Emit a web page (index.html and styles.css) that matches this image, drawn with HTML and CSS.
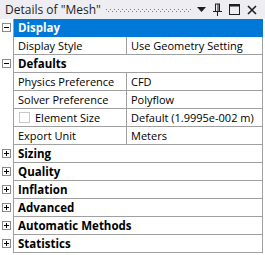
FILE: index.html
```html
<!DOCTYPE html>
<html lang="en">

<head>
    <meta charset="UTF-8">
    <title>Details of "Mesh"</title>
    <link rel="stylesheet" href="styles.css">
</head>

<body>
    <div class="panel">
        <div class="titlebar">
            <span class="title">Details of "Mesh"</span>
            <span class="grip"></span>
            <span class="tools">
                <svg width="9" height="6" viewBox="0 0 9 6"><path d="M0 0h9L4.5 5z" fill="#1e1e1e"/></svg>
                <svg width="9" height="13" viewBox="0 0 9 13"><path d="M2 1h5M2.5 1v7M6.5 1v7M5 1v7M0 8.5h9M4.5 9v4" stroke="#1e1e1e" stroke-width="1" fill="none"/></svg>
                <svg width="11" height="11" viewBox="0 0 11 11"><rect x="0.5" y="0.5" width="10" height="10" fill="none" stroke="#1e1e1e" stroke-width="1"/><path d="M0 1.5h11" stroke="#1e1e1e" stroke-width="2"/></svg>
                <svg width="10" height="10" viewBox="0 0 10 10"><path d="M1 1l8 8M9 1l-8 8" stroke="#1e1e1e" stroke-width="1.6"/></svg>
            </span>
        </div>
        <div class="grid">
            <div class="row group selected">
                <span class="toggle open"></span>
                <div class="cell full">Display</div>
            </div>
            <div class="row">
                <span class="gutter"></span>
                <div class="cell name">Display Style</div>
                <div class="cell value">Use Geometry Setting</div>
            </div>
            <div class="row group">
                <span class="toggle open"></span>
                <div class="cell full">Defaults</div>
            </div>
            <div class="row">
                <span class="gutter"></span>
                <div class="cell name">Physics Preference</div>
                <div class="cell value">CFD</div>
            </div>
            <div class="row">
                <span class="gutter"></span>
                <div class="cell name">Solver Preference</div>
                <div class="cell value">Polyflow</div>
            </div>
            <div class="row">
                <span class="gutter"></span>
                <div class="cell name"><span class="check"></span>Element Size</div>
                <div class="cell value">Default (1.9995e-002 m)</div>
            </div>
            <div class="row">
                <span class="gutter"></span>
                <div class="cell name">Export Unit</div>
                <div class="cell value">Meters</div>
            </div>
            <div class="row group">
                <span class="toggle"></span>
                <div class="cell full">Sizing</div>
            </div>
            <div class="row group">
                <span class="toggle"></span>
                <div class="cell full">Quality</div>
            </div>
            <div class="row group">
                <span class="toggle"></span>
                <div class="cell full">Inflation</div>
            </div>
            <div class="row group">
                <span class="toggle"></span>
                <div class="cell full">Advanced</div>
            </div>
            <div class="row group">
                <span class="toggle"></span>
                <div class="cell full">Automatic Methods</div>
            </div>
            <div class="row group">
                <span class="toggle"></span>
                <div class="cell full">Statistics</div>
            </div>
        </div>
    </div>
</body>

</html>
```

FILE: styles.css
```css
body {
    margin: 0;
    padding: 0;
    background-color: #ffffff;
    font-family: 'Open Sans', 'Noto Sans', sans-serif;
    font-size: 11px;
    color: #000000;
}

.panel {
    width: 265px;
    height: 255px;
    background-color: #ffffff;
    overflow: hidden;
}

.titlebar {
    height: 19px;
    display: flex;
    align-items: center;
    background-color: #eeeef2;
    padding: 0 8px 0 5px;
}

.title {
    color: #1e1e1e;
    font-size: 12px;
    white-space: nowrap;
}

/* dotted drag grip */
.grip {
    flex: 1;
    min-width: 20px;
    height: 3px;
    margin: 1px 5px 0 5px;
    background-image:
        conic-gradient(from 270deg at 1px 1px, #7a7a7a 90deg, transparent 0),
        conic-gradient(from 270deg at 1px 1px, #7a7a7a 90deg, transparent 0);
    background-size: 4px 4px;
    background-position: 0 0, 2px 2px;
}

.tools {
    display: flex;
    align-items: center;
    gap: 7px;
}

.grid {
    display: flex;
    flex-direction: column;
    margin-right: 2px;
}

.row {
    display: flex;
    height: 18px;
}

.gutter,
.toggle {
    width: 13px;
    flex: none;
}

/* expand / collapse box */
.toggle {
    position: relative;
}

.toggle::before {
    content: "";
    position: absolute;
    left: 2px;
    top: 4px;
    width: 7px;
    height: 7px;
    border: 1px solid #8a8a8a;
    background-color: #ffffff;
}

.toggle::after {
    content: "";
    position: absolute;
    left: 4px;
    top: 6px;
    width: 5px;
    height: 5px;
    background:
        linear-gradient(#000000, #000000) 0 2px / 5px 1px no-repeat,
        linear-gradient(#000000, #000000) 2px 0 / 1px 5px no-repeat;
}

.toggle.open::after {
    background: linear-gradient(#000000, #000000) 0 2px / 5px 1px no-repeat;
}

.cell {
    box-sizing: border-box;
    border-bottom: 1px solid #a0a0a0;
    display: flex;
    align-items: center;
    padding-left: 4px;
    white-space: nowrap;
    overflow: hidden;
}

.cell.full,
.cell.name {
    border-left: 1px solid #a0a0a0;
}

.cell.full {
    flex: 1;
    font-size: 11.5px;
    font-weight: 700;
    border-right: 1px solid #a0a0a0;
}

.cell.name {
    width: 114px;
    flex: none;
    border-right: 1px solid #a0a0a0;
}

.cell.value {
    flex: 1;
    border-right: 1px solid #a0a0a0;
}

.row.selected .cell.full {
    background-color: #0078d7;
    color: #ffffff;
    border-color: #0078d7;
    border-left-color: #a0a0a0;
}

.check {
    width: 9px;
    height: 9px;
    border: 1px solid #c8c8c8;
    margin: 0 5px 0 1px;
    flex: none;
}
```
